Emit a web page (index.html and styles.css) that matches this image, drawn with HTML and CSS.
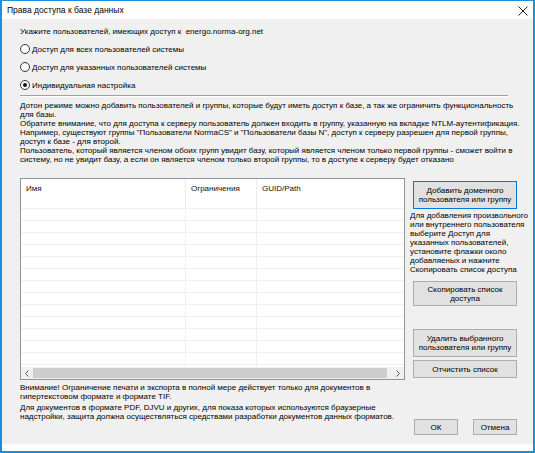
FILE: index.html
```html
<!DOCTYPE html>
<html lang="ru">
<head>
<meta charset="utf-8">
<title>Права доступа к базе данных</title>
<link rel="stylesheet" href="styles.css">
</head>
<body>
<div class="window">
  <div class="titlebar">
    <span class="title">Права доступа к базе данных</span>
    <svg class="close" width="10" height="10" viewBox="0 0 10 10"><path d="M0.5 0.5 L9.5 9.5 M9.5 0.5 L0.5 9.5" stroke="#222" stroke-width="1" fill="none"/></svg>
  </div>
  <div class="content">
    <div class="intro">Укажите пользователей, имеющих доступ к&nbsp; energo.norma-org.net</div>
    <div class="radios">
      <div class="radio"><span class="circle"></span><span>Доступ для всех пользователей системы</span></div>
      <div class="radio"><span class="circle"></span><span>Доступ для указанных пользователей системы</span></div>
      <div class="radio"><span class="circle checked"></span><span>Индивидуальная настройка</span></div>
    </div>
    <div class="sep"></div>
    <div class="desc">Дотон режиме можно добавить пользователей и группы, которые будут иметь доступ к базе, а так же ограничить функциональность<br>для базы.<br>Обратите внимание, что для доступа к серверу пользователь должен входить в группу, указанную на вкладке NTLM-аутентификация.<br>Например, существуют группы "Пользователи NormaCS" и "Пользователи базы N", доступ к серверу разрешен для первой группы,<br>доступ к базе - для второй.<br>Пользователь, который является членом обоих групп увидит базу, который является членом только первой группы - сможет войти в<br>систему, но не увидит базу, а если он является членом только второй группы, то в доступе к серверу будет отказано</div>
    <div class="main">
      <div class="list">
        <div class="lhead">
          <div class="c1">Имя</div>
          <div class="c2">Ограничения</div>
          <div class="c3">GUID/Path</div>
        </div>
        <div class="rows">
          <div class="row"><div class="c1"></div><div class="c2"></div><div class="c3"></div></div>
          <div class="row"><div class="c1"></div><div class="c2"></div><div class="c3"></div></div>
          <div class="row"><div class="c1"></div><div class="c2"></div><div class="c3"></div></div>
          <div class="row"><div class="c1"></div><div class="c2"></div><div class="c3"></div></div>
          <div class="row"><div class="c1"></div><div class="c2"></div><div class="c3"></div></div>
          <div class="row"><div class="c1"></div><div class="c2"></div><div class="c3"></div></div>
          <div class="row"><div class="c1"></div><div class="c2"></div><div class="c3"></div></div>
          <div class="row"><div class="c1"></div><div class="c2"></div><div class="c3"></div></div>
          <div class="row"><div class="c1"></div><div class="c2"></div><div class="c3"></div></div>
          <div class="row"><div class="c1"></div><div class="c2"></div><div class="c3"></div></div>
          <div class="row"><div class="c1"></div><div class="c2"></div><div class="c3"></div></div>
          <div class="row"><div class="c1"></div><div class="c2"></div><div class="c3"></div></div>
          <div class="row"><div class="c1"></div><div class="c2"></div><div class="c3"></div></div>
          <div class="row"><div class="c1"></div><div class="c2"></div><div class="c3"></div></div>
        </div>
        <div class="hscroll">
          <span class="arrow"><svg width="4" height="7" viewBox="0 0 4 7"><path d="M3.5 0.5 L0.5 3.5 L3.5 6.5" stroke="#555" fill="none"/></svg></span>
          <span class="thumb"></span>
          <span class="arrow"><svg width="4" height="7" viewBox="0 0 4 7"><path d="M0.5 0.5 L3.5 3.5 L0.5 6.5" stroke="#555" fill="none"/></svg></span>
        </div>
      </div>
      <div class="side">
        <div class="btn btn-side default b1">Добавить доменного<br>пользователя или группу</div>
        <div class="help">Для добавления произвольного<br>или внутреннего пользователя<br>выберите Доступ для<br>указанных пользователей,<br>установите флажки около<br>добавляеных и нажните<br>Скопировать список доступа</div>
        <div class="btn btn-side b2">Скопировать список<br>доступа</div>
        <div class="btn btn-side b3">Удалить выбранного<br>пользователя или группу</div>
        <div class="btn btn-side b4">Отчистить список</div>
      </div>
    </div>
    <div class="bottom">
      <div class="notes">
        <p>Внимание! Ограничение печати и экспорта в полной мере действует только для документов в<br>гипертекстовом формате и формате TIF.</p>
        <p>Для документов в формате PDF, DJVU и других, для показа которых используются браузерные<br>надстройки, защита должна осуществляться средствами разработки документов данных форматов.</p>
      </div>
      <div class="okrow">
        <div class="btn okbtn">ОК</div>
        <div class="btn okbtn">Отмена</div>
      </div>
    </div>
  </div>
  <div class="footer"></div>
</div>
</body>
</html>
```
FILE: styles.css
```css
* { box-sizing: border-box; }
html, body { margin: 0; padding: 0; }
body {
  width: 535px;
  height: 453px;
  overflow: hidden;
  font-family: "Liberation Sans", Arial, sans-serif;
  font-size: 8px;
  color: #000;
  background: #fff;
}
.window {
  width: 535px;
  height: 453px;
  border: 2px solid #1a8fdb;
  border-top-width: 1px;
  display: flex;
  flex-direction: column;
  background: #fff;
}
.titlebar {
  height: 18px;
  flex: none;
  display: flex;
  align-items: center;
  justify-content: space-between;
  padding: 0 5px 0 5px;
  background: #fff;
}
.title { font-size: 8.5px; }
.close { display: block; margin-top: 2px; }
.content {
  flex: 1;
  background: #f0f0f0;
  padding: 8px 16px 0 18px;
  display: flex;
  flex-direction: column;
  min-height: 0;
}
.footer { height: 7px; flex: none; background: #fff; }
.intro { line-height: 10px; height: 10px; white-space: nowrap; }
.radios { margin-top: 3px; }
.radio {
  height: 18px;
  display: flex;
  align-items: center;
  gap: 2px;
  white-space: nowrap;
}
.circle {
  width: 10px;
  height: 10px;
  border-radius: 50%;
  border: 1px solid #333;
  background: #fff;
  display: flex;
  align-items: center;
  justify-content: center;
  flex: none;
}
.circle.checked::after {
  content: "";
  width: 4px;
  height: 4px;
  border-radius: 50%;
  background: #111;
}
.sep {
  margin-top: 1px;
  width: 488px;
  border-top: 1px solid #a0a0a0;
  border-bottom: 1px solid #fff;
}
.desc { margin-top: 4px; line-height: 9px; white-space: nowrap; }
.main { margin-top: 14px; display: flex; gap: 5px; flex: none; }
.list {
  width: 385px;
  height: 202px;
  border: 1px solid #8f949c;
  background: #fff;
  display: flex;
  flex-direction: column;
}
.lhead { height: 30px; display: flex; flex: none; border-bottom: 1px solid #f0f0f0; }
.lhead > div { padding: 5px 0 0 5px; border-right: 1px solid #ebebeb; color: #111; }
.c1 { width: 165px; flex: none; }
.c2 { width: 71px; flex: none; }
.c3 { flex: 1; border-right: none !important; }
.rows { flex: 1; overflow: hidden; }
.row { height: 12px; display: flex; border-bottom: 1px solid #f0f0f0; }
.row > div { border-right: 1px solid #f0f0f0; }
.hscroll { height: 12px; flex: none; display: flex; background: #f0f0f0; }
.arrow { width: 12px; flex: none; display: flex; align-items: center; justify-content: center; }
.thumb { flex: 1; background: #cdcdcd; margin: 1px 5px 1px 0; }
.side { width: 107px; display: flex; flex-direction: column; }
.btn {
  background: #e1e1e1;
  border: 1px solid #adadad;
  display: flex;
  align-items: center;
  justify-content: center;
  text-align: center;
  line-height: 9px;
  white-space: nowrap;
}
.btn-side { margin-left: 3px; width: 104px; }
.default { border-color: #0078d7; }
.b1 { margin-top: 3px; height: 28px; }
.help { margin-top: 2px; line-height: 9px; white-space: nowrap; }
.b2 { margin-top: 7px; height: 25px; }
.b3 { margin-top: 23px; height: 28px; }
.b4 { margin-top: 3px; height: 18px; }
.bottom { display: flex; justify-content: space-between; flex: 1; }
.notes { margin-top: 3px; line-height: 9px; white-space: nowrap; }
.notes p { margin: 0 0 2px 0; }
.okrow { display: flex; gap: 15px; padding-top: 39px; }
.okbtn { width: 44px; height: 16px; }
```
